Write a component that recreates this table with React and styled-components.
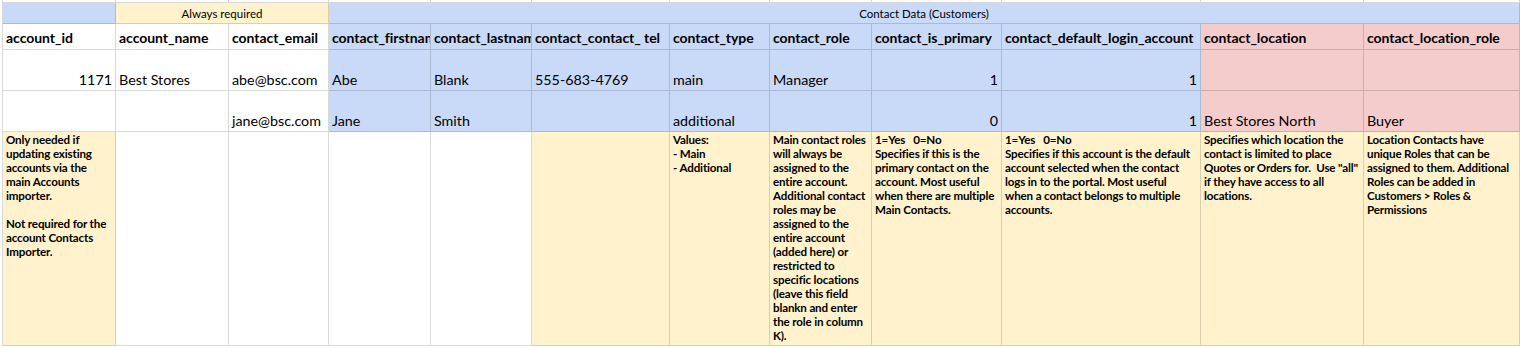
import React from "react";
import styled, { createGlobalStyle } from "styled-components";

const FILL = {
  white: "#ffffff",
  blue: "#c9daf8",
  yellow: "#fff2cc",
  pink: "#f4cccc",
};
const LINE = "rgba(0, 0, 0, 0.15)";
const FONT = `Lato, "Liberation Sans", sans-serif`;

// widths of columns A..K, column L takes what is left
const COLUMNS = [113, 113, 100, 102, 101, 138, 100, 102, 130, 199, 163];

const ROW_FILLS = ["white", "white", "white", "blue", "blue", "blue", "blue", "blue", "blue", "blue", "pink", "pink"];
const NOTE_FILLS = ["yellow", "white", "white", "white", "white", "yellow", "yellow", "yellow", "yellow", "yellow", "yellow", "yellow"];

const HEADERS = [
  "account_id",
  "account_name",
  "contact_email",
  "contact_firstname",
  "contact_lastname",
  "contact_contact_ tel",
  "contact_type",
  "contact_role",
  "contact_is_primary",
  "contact_default_login_account",
  "contact_location",
  "contact_location_role",
];

// [text, right-aligned]
const ROWS = [
  [["1171", true], ["Best Stores"], ["abe@bsc.com"], ["Abe"], ["Blank"], ["555-683-4769"], ["main"], ["Manager"], ["1", true], ["1", true], [""], [""]],
  [[""], [""], ["jane@bsc.com"], ["Jane"], ["Smith"], [""], ["additional"], [""], ["0", true], ["1", true], ["Best Stores North"], ["Buyer"]],
];

const NOTES = [
  ["Only needed if", "updating existing", "accounts via the", "main Accounts", "importer.", "", "Not required for the", "account Contacts", "Importer."],
  [],
  [],
  [],
  [],
  [],
  ["Values:", "- Main", "- Additional"],
  [
    "Main contact roles",
    "will always be",
    "assigned to the",
    "entire account.",
    "Additional contact",
    "roles may be",
    "assigned to the",
    "entire account",
    "(added here) or",
    "restricted to",
    "specific locations",
    "(leave this field",
    "blankn and enter",
    "the role in column",
    "K).",
  ],
  ["1=Yes   0=No", "Specifies if this is the", "primary contact on the", "account. Most useful", "when there are multiple", "Main Contacts."],
  [
    "1=Yes   0=No",
    "Specifies if this account is the default",
    "account selected when the contact",
    "logs in to the portal. Most useful",
    "when a contact belongs to multiple",
    "accounts.",
  ],
  ["Specifies which location the", "contact is limited to place", 'Quotes or Orders for.  Use "all"', "if they have access to all", "locations."],
  ["Location Contacts have", "unique Roles that can be", "assigned to them. Additional", "Roles can be added in", "Customers > Roles &", "Permissions"],
];

const GlobalStyle = createGlobalStyle`
  html, body {
    margin: 0;
    padding: 0;
    background: #ffffff;
    overflow: hidden;
  }
  body {
    font-family: ${FONT};
    color: #000000;
  }
`;

const Sheet = styled.div`
  display: grid;
  grid-template-columns: ${COLUMNS.map((w) => `${w}px`).join(" ")} 1fr;
  grid-template-rows: 3px 21px 26px 41px 41px 214px;
  width: 1518px;
  margin-left: 2px;
  border-left: 1px solid ${LINE};
  box-sizing: border-box;
`;

const Cell = styled.div`
  box-sizing: border-box;
  display: flex;
  min-width: 0;
  overflow: hidden;
  white-space: pre;
  padding: 0 3px;
  background: ${(p) => FILL[p.$fill || "white"]};
  border-right: 1px solid ${LINE};
  border-bottom: 1px solid ${LINE};
  grid-column: span ${(p) => p.$span || 1};
`;

const GroupCell = styled(Cell)`
  align-items: center;
  justify-content: center;
  font-size: 11.5px;
  padding-top: 1px;
`;

const HeadCell = styled(Cell)`
  align-items: flex-end;
  font-size: 14px;
  font-weight: 700;
  letter-spacing: -0.05px;
  line-height: 18px;
  padding-bottom: 2px;
`;

const DataCell = styled(Cell)`
  align-items: flex-end;
  justify-content: ${(p) => (p.$right ? "flex-end" : "flex-start")};
  font-size: 14.3px;
  line-height: 18px;
  padding-bottom: 1px;
`;

const NoteCell = styled(Cell)`
  flex-direction: column;
  font-size: 11.6px;
  font-weight: 700;
  letter-spacing: -0.15px;
  line-height: 14px;
  padding-top: 1px;
`;

const NoteLine = styled.span`
  display: block;
  height: 14px;
`;

export default function App() {
  return (
    <>
      <GlobalStyle />
      <Sheet>
        {ROW_FILLS.map((_, i) => (
          <Cell key={`top-${i}`} />
        ))}

        <GroupCell $fill="blue" />
        <GroupCell $fill="yellow" $span={2}>
          Always required
        </GroupCell>
        <GroupCell $fill="blue" $span={9}>
          Contact Data (Customers)
        </GroupCell>

        {HEADERS.map((h, i) => (
          <HeadCell key={h} $fill={ROW_FILLS[i]}>
            {h}
          </HeadCell>
        ))}

        {ROWS.map((row, r) =>
          row.map(([text, right], i) => (
            <DataCell key={`r${r}-${i}`} $fill={ROW_FILLS[i]} $right={right}>
              {text}
            </DataCell>
          ))
        )}

        {NOTES.map((lines, i) => (
          <NoteCell key={`note-${i}`} $fill={NOTE_FILLS[i]}>
            {lines.map((line, j) => (
              <NoteLine key={j}>{line}</NoteLine>
            ))}
          </NoteCell>
        ))}
      </Sheet>
    </>
  );
}
